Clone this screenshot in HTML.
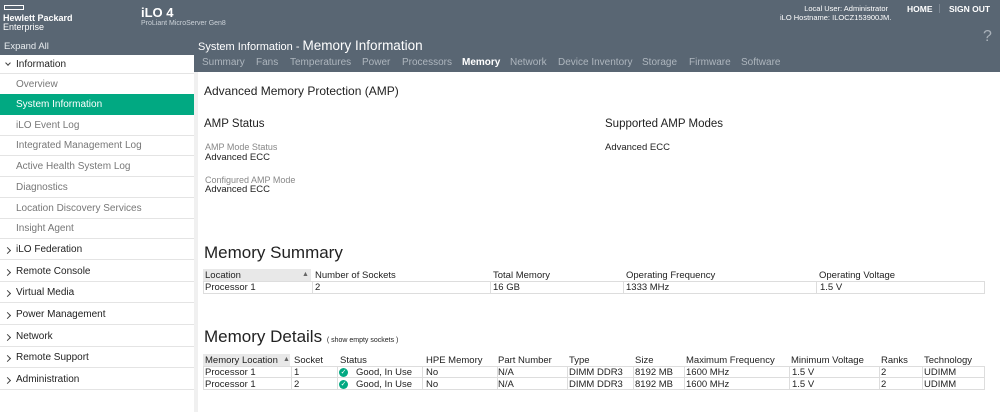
<!DOCTYPE html>
<html><head><meta charset="utf-8"><style>
*{margin:0;padding:0;box-sizing:border-box}
body{width:1000px;height:412px;overflow:hidden;background:#fff;font-family:"Liberation Sans",Arial,sans-serif;position:relative;color:#222}
.a{position:absolute;white-space:nowrap}
#hdr{position:absolute;left:0;top:0;width:1000px;height:72px;background:#596673}
#side{position:absolute;left:0;top:55px;width:194px;height:357px;background:#fff}
#strip{position:absolute;left:194px;top:72px;width:4px;height:340px;background:#f0f0f0}
.si{position:absolute;left:0;width:194px;height:21px;border-bottom:1px solid #e4e4e4;font-size:10px;line-height:22px;padding-left:16px;color:#777}
.sb{color:#222}
.sb:before{content:"";position:absolute;left:5px;top:9px;width:4px;height:4px;border-right:1px solid #444;border-top:1px solid #444;transform:rotate(45deg)}
.tab{font-size:10px;color:#aeb6be;top:57px}
.t{position:absolute;font-size:9.5px;line-height:11px;color:#222}
.row{position:absolute;left:203px;width:782px;height:12px;border:1px solid #ddd;border-top:none}
.vl{position:absolute;top:0;width:1px;height:100%;background:#ddd}
</style></head><body>
<div id="hdr"></div>
<div id="side"></div>
<div id="strip"></div>
<div class="a" style="left:4px;top:5px;width:20px;height:5px;border:1.5px solid #fff"></div>
<div class="a" style="left:3px;top:13px;font-size:9px;font-weight:bold;color:#fff">Hewlett Packard</div>
<div class="a" style="left:3px;top:22px;font-size:9px;color:#fff">Enterprise</div>
<div class="a" style="left:4px;top:41px;font-size:9.5px;color:#e8ecef">Expand All</div>
<div class="a" style="left:141px;top:5px;font-size:13px;font-weight:bold;color:#fff">iLO 4</div>
<div class="a" style="left:141px;top:20px;font-size:7px;color:#ccd2d8">ProLiant MicroServer Gen8</div>
<div class="a" style="left:780px;top:4px;font-size:7.5px;color:#fff;text-align:right;width:108px;line-height:9px">Local User: Administrator<br>iLO Hostname: ILOCZ153900JM.</div>
<div class="a" style="left:907px;top:4px;font-size:8.5px;font-weight:bold;color:#fff">HOME</div>
<div class="a" style="left:939px;top:4px;width:1px;height:9px;background:#7a8591"></div>
<div class="a" style="left:949px;top:4px;font-size:8.5px;font-weight:bold;color:#fff">SIGN OUT</div>
<div class="a" style="left:983px;top:28px;font-size:16px;color:#aab2ba">?</div>
<div class="a" style="left:198px;top:38px;font-size:11px;color:#fff">System Information - <span style="font-size:13.5px">Memory Information</span></div>
<div class="a tab" style="left:202px">Summary</div>
<div class="a tab" style="left:256px">Fans</div>
<div class="a tab" style="left:290px">Temperatures</div>
<div class="a tab" style="left:362px">Power</div>
<div class="a tab" style="left:402px">Processors</div>
<div class="a tab" style="left:462px;color:#fff;font-weight:bold">Memory</div>
<div class="a tab" style="left:510px">Network</div>
<div class="a tab" style="left:558px">Device Inventory</div>
<div class="a tab" style="left:642px">Storage</div>
<div class="a tab" style="left:689px">Firmware</div>
<div class="a tab" style="left:741px">Software</div>

<div class="si" style="top:55px;color:#222;height:19px;line-height:19px">Information</div>
<div class="a" style="left:6px;top:61px;width:4px;height:4px;border-right:1px solid #444;border-bottom:1px solid #444;transform:rotate(45deg)"></div>
<div class="si" style="top:74px">Overview</div>
<div class="si" style="top:94px;background:#01a982;color:#fff;border:none">System Information</div>
<div class="si" style="top:115px">iLO Event Log</div>
<div class="si" style="top:135px">Integrated Management Log</div>
<div class="si" style="top:156px">Active Health System Log</div>
<div class="si" style="top:177px">Diagnostics</div>
<div class="si" style="top:198px">Location Discovery Services</div>
<div class="si" style="top:218px">Insight Agent</div>
<div class="si sb" style="top:239px">iLO Federation</div>
<div class="si sb" style="top:261px">Remote Console</div>
<div class="si sb" style="top:282px">Virtual Media</div>
<div class="si sb" style="top:304px">Power Management</div>
<div class="si sb" style="top:326px">Network</div>
<div class="si sb" style="top:347px">Remote Support</div>
<div class="si sb" style="top:369px">Administration</div>

<div class="a" style="left:204px;top:84px;font-size:12px">Advanced Memory Protection (AMP)</div>
<div class="a" style="left:204px;top:118px;font-size:11.5px">AMP Status</div>
<div class="a" style="left:605px;top:118px;font-size:11.5px">Supported AMP Modes</div>
<div class="a" style="left:205px;top:142px;font-size:9px;color:#888">AMP Mode Status</div>
<div class="a" style="left:205px;top:152px;font-size:9.5px">Advanced ECC</div>
<div class="a" style="left:605px;top:142px;font-size:9.5px">Advanced ECC</div>
<div class="a" style="left:205px;top:175px;font-size:9px;color:#888">Configured AMP Mode</div>
<div class="a" style="left:205px;top:184px;font-size:9.5px">Advanced ECC</div>

<div class="a" style="left:204px;top:243px;font-size:17px">Memory Summary</div>
<div class="a" style="left:203px;top:269px;width:108px;height:12px;background:#e8e8e8"></div>
<div class="t" style="left:205px;top:270px">Location</div>
<div class="t" style="left:302px;top:269px;font-size:7px;color:#666">▲</div>
<div class="t" style="left:315px;top:270px">Number of Sockets</div>
<div class="t" style="left:493px;top:270px">Total Memory</div>
<div class="t" style="left:626px;top:270px">Operating Frequency</div>
<div class="t" style="left:819px;top:270px">Operating Voltage</div>
<div class="row" style="top:281px;border-top:1px solid #ddd;height:13px">
<div class="vl" style="left:108px"></div><div class="vl" style="left:286px"></div><div class="vl" style="left:419px"></div><div class="vl" style="left:612px"></div></div>
<div class="t" style="left:205px;top:282px">Processor 1</div>
<div class="t" style="left:315px;top:282px">2</div>
<div class="t" style="left:493px;top:282px">16 GB</div>
<div class="t" style="left:626px;top:282px">1333 MHz</div>
<div class="t" style="left:820px;top:282px">1.5 V</div>

<div class="a" style="left:204px;top:327px;font-size:17px">Memory Details <span style="font-size:7px">( show empty sockets )</span></div>
<div class="a" style="left:203px;top:354px;width:87px;height:12px;background:#e8e8e8"></div>
<div class="t" style="left:205px;top:355px">Memory Location</div>
<div class="t" style="left:283px;top:354px;font-size:7px;color:#666">▲</div>
<div class="t" style="left:294px;top:355px">Socket</div>
<div class="t" style="left:340px;top:355px">Status</div>
<div class="t" style="left:426px;top:355px">HPE Memory</div>
<div class="t" style="left:498px;top:355px">Part Number</div>
<div class="t" style="left:569px;top:355px">Type</div>
<div class="t" style="left:635px;top:355px">Size</div>
<div class="t" style="left:686px;top:355px">Maximum Frequency</div>
<div class="t" style="left:791px;top:355px">Minimum Voltage</div>
<div class="t" style="left:881px;top:355px">Ranks</div>
<div class="t" style="left:924px;top:355px">Technology</div>
<div class="row" style="top:366px;border-top:1px solid #ddd"><div class="vl" style="left:87px"></div><div class="vl" style="left:133px"></div><div class="vl" style="left:218px"></div><div class="vl" style="left:293px"></div><div class="vl" style="left:363px"></div><div class="vl" style="left:429px"></div><div class="vl" style="left:480px"></div><div class="vl" style="left:585px"></div><div class="vl" style="left:675px"></div><div class="vl" style="left:718px"></div></div>
<div class="row" style="top:378px"><div class="vl" style="left:87px"></div><div class="vl" style="left:133px"></div><div class="vl" style="left:218px"></div><div class="vl" style="left:293px"></div><div class="vl" style="left:363px"></div><div class="vl" style="left:429px"></div><div class="vl" style="left:480px"></div><div class="vl" style="left:585px"></div><div class="vl" style="left:675px"></div><div class="vl" style="left:718px"></div></div>
<div class="t" style="left:205px;top:367px">Processor 1</div><div class="t" style="left:294px;top:367px">1</div>
<div class="a" style="left:339px;top:368px;width:9px;height:9px;border-radius:50%;background:#01a982;color:#fff;font-size:7px;line-height:9px;text-align:center">✓</div>
<div class="t" style="left:356px;top:367px">Good, In Use</div><div class="t" style="left:426px;top:367px">No</div><div class="t" style="left:498px;top:367px">N/A</div><div class="t" style="left:569px;top:367px">DIMM DDR3</div><div class="t" style="left:635px;top:367px">8192 MB</div><div class="t" style="left:686px;top:367px">1600 MHz</div><div class="t" style="left:792px;top:367px">1.5 V</div><div class="t" style="left:881px;top:367px">2</div><div class="t" style="left:924px;top:367px">UDIMM</div>
<div class="t" style="left:205px;top:379px">Processor 1</div><div class="t" style="left:294px;top:379px">2</div>
<div class="a" style="left:339px;top:380px;width:9px;height:9px;border-radius:50%;background:#01a982;color:#fff;font-size:7px;line-height:9px;text-align:center">✓</div>
<div class="t" style="left:356px;top:379px">Good, In Use</div><div class="t" style="left:426px;top:379px">No</div><div class="t" style="left:498px;top:379px">N/A</div><div class="t" style="left:569px;top:379px">DIMM DDR3</div><div class="t" style="left:635px;top:379px">8192 MB</div><div class="t" style="left:686px;top:379px">1600 MHz</div><div class="t" style="left:792px;top:379px">1.5 V</div><div class="t" style="left:881px;top:379px">2</div><div class="t" style="left:924px;top:379px">UDIMM</div>
</body></html>
